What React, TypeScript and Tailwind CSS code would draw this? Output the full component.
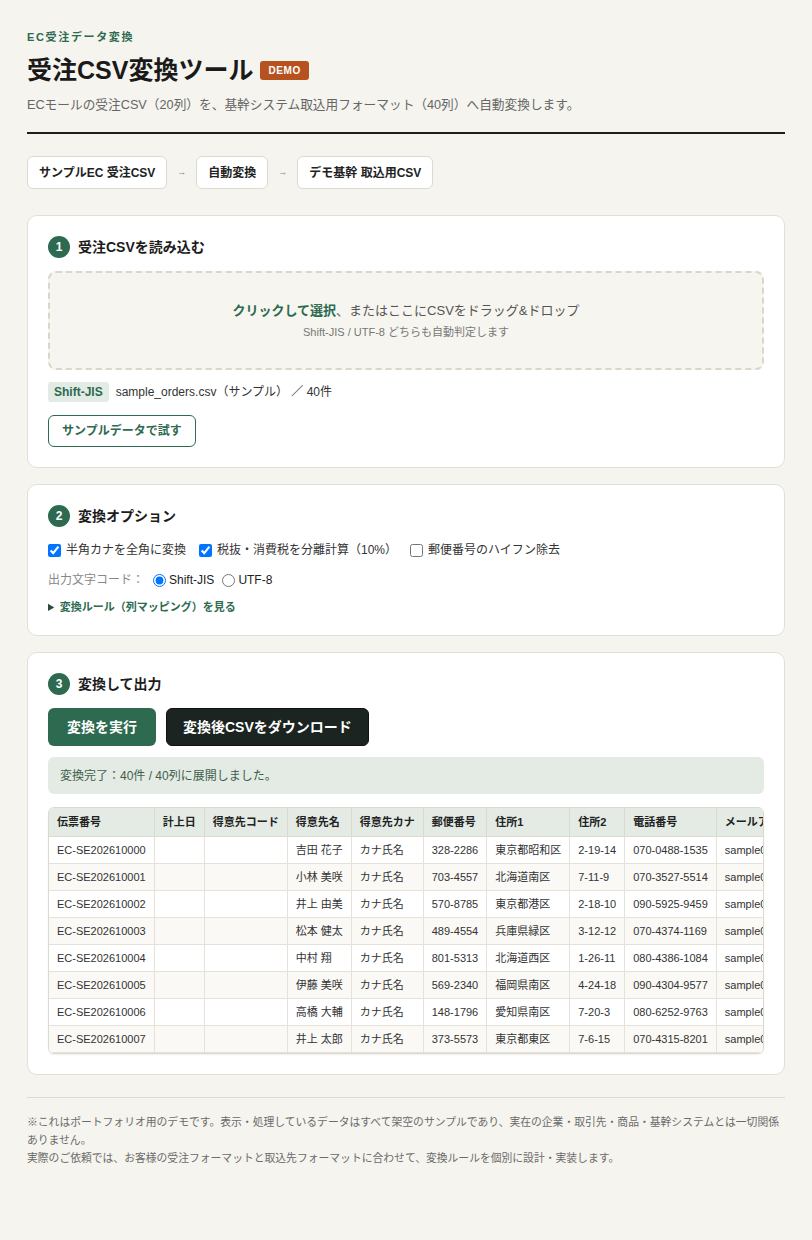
import { useState } from 'react';

type Row = {
  denpyo: string;
  name: string;
  zip: string;
  addr1: string;
  addr2: string;
  tel: string;
};

const rows: Row[] = [
  { denpyo: 'EC-SE202610000', name: '吉田 花子', zip: '328-2286', addr1: '東京都昭和区', addr2: '2-19-14', tel: '070-0488-1535' },
  { denpyo: 'EC-SE202610001', name: '小林 美咲', zip: '703-4557', addr1: '北海道南区', addr2: '7-11-9', tel: '070-3527-5514' },
  { denpyo: 'EC-SE202610002', name: '井上 由美', zip: '570-8785', addr1: '東京都港区', addr2: '2-18-10', tel: '090-5925-9459' },
  { denpyo: 'EC-SE202610003', name: '松本 健太', zip: '489-4554', addr1: '兵庫県緑区', addr2: '3-12-12', tel: '070-4374-1169' },
  { denpyo: 'EC-SE202610004', name: '中村 翔', zip: '801-5313', addr1: '北海道西区', addr2: '1-26-11', tel: '080-4386-1084' },
  { denpyo: 'EC-SE202610005', name: '伊藤 美咲', zip: '569-2340', addr1: '福岡県南区', addr2: '4-24-18', tel: '090-4304-9577' },
  { denpyo: 'EC-SE202610006', name: '高橋 大輔', zip: '148-1796', addr1: '愛知県南区', addr2: '7-20-3', tel: '080-6252-9763' },
  { denpyo: 'EC-SE202610007', name: '井上 太郎', zip: '373-5573', addr1: '東京都東区', addr2: '7-6-15', tel: '070-4315-8201' },
];

const headers = ['伝票番号', '計上日', '得意先コード', '得意先名', '得意先カナ', '郵便番号', '住所1', '住所2', '電話番号', 'メールアドレス', '商品コード', '商品名'];

const StepTitle = ({ num, title }: { num: number; title: string }) => (
  <div className="flex items-center gap-2 h-[22px]">
    <span className="w-[22px] h-[22px] rounded-full bg-[#2d6a4f] text-white text-[12px] font-bold flex items-center justify-center">
      {num}
    </span>
    <h2 className="text-[14px] font-bold text-[#1c1c1c]">{title}</h2>
  </div>
);

export default function App() {
  const [kana, setKana] = useState(true);
  const [tax, setTax] = useState(true);
  const [zip, setZip] = useState(false);
  const [encoding, setEncoding] = useState<'sjis' | 'utf8'>('sjis');

  return (
    <div className="min-h-[1240px] bg-[#f5f4ef] font-['Liberation_Sans','Noto_Sans_CJK_JP',sans-serif] text-[#222]">
      <div className="px-[27px] pt-[29px] pb-10">
        {/* header */}
        <header className="pb-[17px] border-b-2 border-[#1d1d1d]">
          <p className="text-[11px] leading-4 font-bold tracking-[0.15em] text-[#2d6a4f]">EC受注データ変換</p>
          <div className="mt-2 flex items-center">
            <h1 className="text-[25px] leading-[34px] font-bold text-[#1a1a1a]">受注CSV変換ツール</h1>
            <span className="ml-[7px] px-[8px] h-[19px] flex items-center rounded-[3px] bg-[#b5521f] text-white text-[10px] font-bold tracking-[0.06em]">
              DEMO
            </span>
          </div>
          <p className="mt-2 text-[12.7px] leading-5 text-[#666]">
            ECモールの受注CSV（20列）を、基幹システム取込用フォーマット（40列）へ自動変換します。
          </p>
        </header>

        {/* pipeline */}
        <div className="mt-[22px] flex items-center gap-[10px]">
          <span className="h-[33px] px-[11px] flex items-center bg-white border border-[#dcd9d0] rounded-md text-[12px] font-bold text-[#222]">
            サンプルEC 受注CSV
          </span>
          <span className="text-[9px] text-[#888]">→</span>
          <span className="h-[33px] px-[11px] flex items-center bg-white border border-[#dcd9d0] rounded-md text-[12px] font-bold text-[#222]">
            自動変換
          </span>
          <span className="text-[9px] text-[#888]">→</span>
          <span className="h-[33px] px-[11px] flex items-center bg-white border border-[#dcd9d0] rounded-md text-[12px] font-bold text-[#222]">
            デモ基幹 取込用CSV
          </span>
        </div>

        <div className="mt-[26px] flex flex-col gap-4">
          {/* step 1 */}
          <section className="bg-white border border-[#e2dfd6] rounded-[10px] p-5">
            <StepTitle num={1} title="受注CSVを読み込む" />
            <div className="mt-[13px] h-[99px] rounded-lg border-2 border-dashed border-[#dcd6c9] bg-[#f6f5f0] flex flex-col items-center justify-center">
              <p className="text-[13px] leading-5 text-[#555]">
                <span className="font-bold text-[#2d6a4f]">クリックして選択</span>、またはここにCSVをドラッグ&ドロップ
              </p>
              <p className="mt-[3px] text-[11px] leading-4 text-[#777]">Shift-JIS / UTF-8 どちらも自動判定します</p>
            </div>
            <div className="mt-3 flex items-center gap-[7px]">
              <span className="h-5 px-[6px] flex items-center rounded-[3px] bg-[#e2ece5] text-[12px] font-bold text-[#2d6a4f]">Shift-JIS</span>
              <span className="text-[12px] text-[#333]">sample_orders.csv（サンプル） ／ 40件</span>
            </div>
            <button className="mt-[13px] h-8 px-[13px] rounded-md border border-[#2d6a4f] bg-white text-[12px] font-bold text-[#2d6a4f]">
              サンプルデータで試す
            </button>
          </section>

          {/* step 2 */}
          <section className="bg-white border border-[#e2dfd6] rounded-[10px] p-5">
            <StepTitle num={2} title="変換オプション" />
            <div className="mt-[14px] flex items-center gap-[13px] text-[12px] text-[#333]">
              <label className="flex items-center gap-[5px]">
                <input type="checkbox" checked={kana} onChange={(e) => setKana(e.target.checked)} className="m-0 w-[13px] h-[13px]" />
                半角カナを全角に変換
              </label>
              <label className="flex items-center gap-[5px]">
                <input type="checkbox" checked={tax} onChange={(e) => setTax(e.target.checked)} className="m-0 w-[13px] h-[13px]" />
                税抜・消費税を分離計算（10%）
              </label>
              <label className="flex items-center gap-[5px]">
                <input type="checkbox" checked={zip} onChange={(e) => setZip(e.target.checked)} className="m-0 w-[13px] h-[13px]" />
                郵便番号のハイフン除去
              </label>
            </div>
            <div className="mt-3 flex items-center text-[12px]">
              <span className="text-[#888] mr-[9px]">出力文字コード：</span>
              <label className="flex items-center gap-[3px] text-[#222]">
                <input type="radio" name="enc" checked={encoding === 'sjis'} onChange={() => setEncoding('sjis')} className="m-0 w-[13px] h-[13px]" />
                Shift-JIS
              </label>
              <label className="ml-[8px] flex items-center gap-[3px] text-[#222]">
                <input type="radio" name="enc" checked={encoding === 'utf8'} onChange={() => setEncoding('utf8')} className="m-0 w-[13px] h-[13px]" />
                UTF-8
              </label>
            </div>
            <details className="mt-[10px]">
              <summary className="cursor-pointer text-[11px] leading-4 font-bold text-[#2d6a4f] marker:text-[#2d4a3a]">
                変換ルール（列マッピング）を見る
              </summary>
            </details>
          </section>

          {/* step 3 */}
          <section className="bg-white border border-[#e2dfd6] rounded-[10px] p-5">
            <StepTitle num={3} title="変換して出力" />
            <div className="mt-[13px] flex items-center gap-[10px]">
              <button className="h-[38px] px-[19px] rounded-md bg-[#2d6a4f] text-white text-[14px] font-bold">変換を実行</button>
              <button className="h-[38px] px-[16px] rounded-md bg-[#1b2420] border border-[#111] text-white text-[14px] font-bold">
                変換後CSVをダウンロード
              </button>
            </div>
            <div className="mt-[11px] h-[37px] px-3 flex items-center rounded-md bg-[#e3ebe4] text-[12px] text-[#3f5e4b]">
              変換完了：40件 / 40列に展開しました。
            </div>
            <div className="mt-[13px] border border-[#dcd9cf] rounded-md overflow-x-auto [scrollbar-width:none] shadow-[0_1px_2px_rgba(0,0,0,0.06)]">
              <table className="border-collapse text-[11px] leading-4 whitespace-nowrap">
                <thead>
                  <tr className="bg-[#e3ebe4]">
                    {headers.map((h) => (
                      <th key={h} className="px-2 py-[6px] text-left font-bold text-[#222] border-r border-b border-[#dcd9cf]">
                        {h}
                      </th>
                    ))}
                  </tr>
                </thead>
                <tbody>
                  {rows.map((r, i) => (
                    <tr key={r.denpyo} className={i % 2 === 1 ? 'bg-[#faf9f5]' : 'bg-white'}>
                      <td className="px-2 py-[5px] border-r border-b border-[#e5e2da] text-[#333]">{r.denpyo}</td>
                      <td className="px-2 py-[5px] border-r border-b border-[#e5e2da]"></td>
                      <td className="px-2 py-[5px] border-r border-b border-[#e5e2da]"></td>
                      <td className="px-2 py-[5px] border-r border-b border-[#e5e2da] text-[#333]">{r.name}</td>
                      <td className="px-2 py-[5px] border-r border-b border-[#e5e2da] text-[#333]">カナ氏名</td>
                      <td className="px-2 py-[5px] border-r border-b border-[#e5e2da] text-[#333]">{r.zip}</td>
                      <td className="px-2 py-[5px] border-r border-b border-[#e5e2da] text-[#333]">{r.addr1}</td>
                      <td className="px-2 py-[5px] border-r border-b border-[#e5e2da] text-[#333]">{r.addr2}</td>
                      <td className="px-2 py-[5px] border-r border-b border-[#e5e2da] text-[#333]">{r.tel}</td>
                      <td className="px-2 py-[5px] border-r border-b border-[#e5e2da] text-[#333]">sample00{i}@example.com</td>
                      <td className="px-2 py-[5px] border-r border-b border-[#e5e2da] text-[#333]">SKU-100{i}</td>
                      <td className="px-2 py-[5px] border-b border-[#e5e2da] text-[#333]">サンプル商品</td>
                    </tr>
                  ))}
                </tbody>
              </table>
            </div>
          </section>
        </div>

        {/* footer */}
        <footer className="mt-[22px] pt-[15px] border-t border-[#dcd9d1] text-[10.8px] leading-[18px] text-[#6b6b6b]">
          <p>
            ※これはポートフォリオ用のデモです。表示・処理しているデータはすべて架空のサンプルであり、実在の企業・取引先・商品・基幹システムとは一切関係ありません。
          </p>
          <p>実際のご依頼では、お客様の受注フォーマットと取込先フォーマットに合わせて、変換ルールを個別に設計・実装します。</p>
        </footer>
      </div>
    </div>
  );
}
